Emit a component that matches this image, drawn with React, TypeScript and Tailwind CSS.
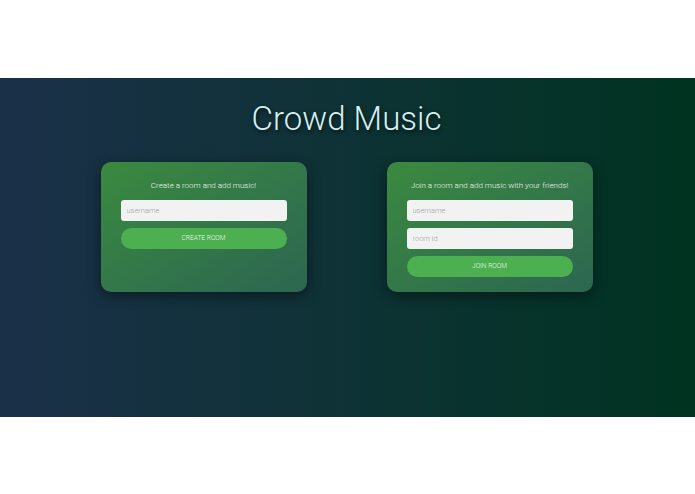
import React from 'react'

const font = { fontFamily: 'Roboto, "Liberation Sans", sans-serif' }

function RoomCard({
  prompt,
  fields,
  action,
}: {
  prompt: string
  fields: string[]
  action: string
}) {
  return (
    <div className="flex h-[130px] w-[206px] flex-col items-center rounded-[10px] bg-gradient-to-br from-[#3b8a3e] to-[#2c6650] px-5 pt-[19px] shadow-[0_4px_14px_rgba(0,0,0,0.45)]">
      <p className="whitespace-nowrap text-[8px] font-light leading-[10px] text-[#f0f8f0]">{prompt}</p>
      <div className="mt-[9px] flex w-full flex-col gap-[7px]">
        {fields.map(f => (
          <input
            key={f}
            placeholder={f}
            className="h-[21px] w-full rounded-[3px] bg-[#f2f2f2] px-[6px] text-[7.5px] font-light text-gray-700 outline-none placeholder:text-[#a0a0a0]"
            style={font}
          />
        ))}
        <button
          className="h-[21px] w-full rounded-full bg-[#4caf50] text-[6.6px] font-light uppercase text-[#f0f8f0]"
          style={font}
        >
          {action}
        </button>
      </div>
    </div>
  )
}

export default function App() {
  return (
    <div className="min-h-[494px] bg-white" style={font}>
      <div className="h-[78px]" />
      <section className="flex h-[339px] flex-col items-center bg-gradient-to-r from-[#1a3049] to-[#003320]">
        <h1 className="mt-[21px] mr-[2px] text-[33px] font-light leading-[40px] text-[#d6f0f0] [text-shadow:1px_2px_4px_rgba(0,0,0,0.7)]">
          Crowd Music
        </h1>
        <div className="mt-[23px] mr-[2px] flex gap-[80px]">
          <RoomCard prompt="Create a room and add music!" fields={['username']} action="Create Room" />
          <RoomCard
            prompt="Join a room and add music with your friends!"
            fields={['username', 'room id']}
            action="Join Room"
          />
        </div>
      </section>
    </div>
  )
}
